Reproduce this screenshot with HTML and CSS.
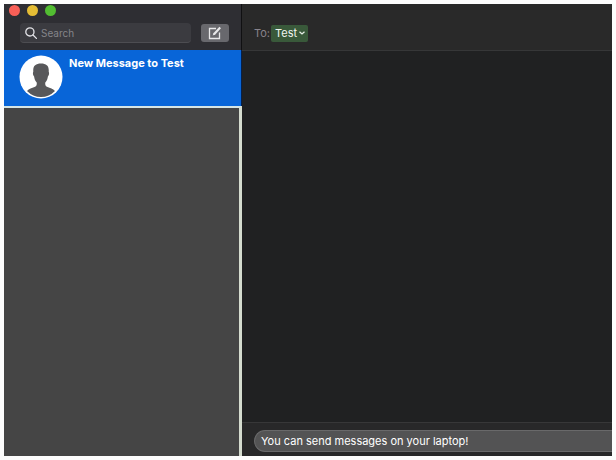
FILE: index.html
```html
<!DOCTYPE html>
<html lang="en">
<head>
  <meta charset="UTF-8" />
  <meta name="viewport" content="width=device-width, initial-scale=1.0"/>
  <title>Messages</title>
  <link rel="stylesheet" href="styles.css">
</head>
<body>

<div class="window">
  <aside class="sidebar">
    <div class="sidebar-top">
      <div class="lights">
        <button type="button" class="light red" aria-label="Close"></button>
        <button type="button" class="light yellow" aria-label="Minimize"></button>
        <button type="button" class="light green" aria-label="Zoom"></button>
      </div>
      <div class="tools">
        <label class="search">
          <svg width="12" height="12" viewBox="0 0 12 12" fill="none" stroke="#e4e4e8" stroke-width="1.3" stroke-linecap="round" aria-hidden="true">
            <circle cx="4.9" cy="4.9" r="4.1"/>
            <path d="M8 8l3.4 3.4"/>
          </svg>
          <input type="search" placeholder="Search" aria-label="Search" />
        </label>
        <button type="button" class="compose" aria-label="New message">
          <svg width="14" height="14" viewBox="0 0 14 14" fill="none" stroke="#e8e8ea" aria-hidden="true">
            <path d="M8 2.5H1.5v10h10V6.5" stroke-width="1.3"/>
            <path d="M6 8.2L12.2 1.6" stroke-width="2.2"/>
            <path d="M5.8 6.8L4.6 9.6L7.4 8.4z" fill="#e8e8ea" stroke="none"/>
          </svg>
        </button>
      </div>
    </div>
    <a href="#" class="conversation">
      <svg class="avatar" width="44" height="44" viewBox="0 0 44 44" aria-hidden="true">
        <circle cx="22" cy="22" r="21.5" fill="#fff"/>
        <path d="M8 36C10 33.500 13 33 15.500 32C17.500 31 18 30 17.700 27.500C16.300 26 15.400 24 15.100 21.500C13.900 20.500 13.600 18 14.300 16.500C13.800 11 16.500 8.500 22 8.500S30.200 11 29.700 16.500C30.400 18 30.100 20.500 28.900 21.500C28.600 24 27.700 26 26.300 27.500C26 30 26.500 31 28.500 32C31 33 34 33.500 36 36A19.500 19.500 0 0 1 8 36Z" fill="#58585a"/>
      </svg>
      <span class="name">New Message to Test</span>
    </a>
    <div class="list"></div>
  </aside>

  <main class="chat">
    <header class="chat-header">
      <span class="to">To:</span>
      <button type="button" class="recipient">Test
        <svg width="6" height="4" viewBox="0 0 6 4" fill="none" stroke="#e6eee6" stroke-width="1.3" aria-hidden="true">
          <path d="M0.500 0.700L3 2.900L5.500 0.700"/>
        </svg>
      </button>
    </header>
    <div class="messages"></div>
    <form class="chat-footer">
      <input type="text" class="message" value="You can send messages on your laptop!" aria-label="Message" />
    </form>
  </main>
</div>

</body>
</html>
```
FILE: styles.css
```css
* {
  box-sizing: border-box;
}

body {
  margin: 0;
  padding: 4px;
  height: 100vh;
  background: #fdfdfd;
  font-family: Inter, "Liberation Sans", sans-serif;
  font-size: 11px;
}

button, input {
  font: inherit;
  border: none;
  padding: 0;
  margin: 0;
}

.window {
  display: flex;
  height: 100%;
  overflow: hidden;
}

.sidebar {
  display: flex;
  flex-direction: column;
  flex: 0 0 39%;
  min-width: 238px;
}

.sidebar-top {
  height: 46px;
  padding: 1px 12px 0 5px;
  background: #2e2e33;
  border-right: 1px solid #101012;
}

.lights {
  display: flex;
  gap: 7px;
}

.light {
  width: 11px;
  height: 11px;
  border-radius: 50%;
}

.red {
  background: #f85f57;
}

.yellow {
  background: #e5bd35;
}

.green {
  background: #52bd32;
}

.tools {
  display: flex;
  align-items: center;
  gap: 10px;
  margin-top: 7px;
  padding-left: 11px;
}

.search {
  display: flex;
  align-items: center;
  gap: 4px;
  flex: 1;
  min-width: 0;
  height: 20px;
  padding-left: 5px;
  border-radius: 4px;
  background: #3b3b40;
  border-bottom: 1px solid #4d4d52;
  font-size: 10px;
}

.search input {
  flex: 1;
  min-width: 0;
  background: none;
  color: #e4e4e8;
  outline: none;
}

.search input::placeholder {
  color: #85858a;
}

.compose {
  display: flex;
  align-items: center;
  justify-content: center;
  width: 28px;
  height: 18px;
  border-radius: 3px;
  background: #68686d;
}

.conversation {
  display: flex;
  gap: 6px;
  height: 56px;
  padding: 5px 15px;
  background: #0865d8;
  border-right: 1px solid #06204a;
  color: #fff;
  text-decoration: none;
}

.avatar {
  flex: none;
}

.name {
  padding-top: 1px;
  line-height: 14px;
  font-weight: 700;
  white-space: nowrap;
}

.list {
  flex: 1;
  background: #454545;
  border-top: 2px solid #d5e5e5;
  border-right: 3px solid #d5dccf;
}

.chat {
  display: flex;
  flex-direction: column;
  flex: 1;
  min-width: 0;
  background: #202122;
}

.chat-header {
  display: flex;
  align-items: center;
  gap: 1px;
  height: 47px;
  padding: 12px 12px 0;
  background: #292929;
  border-bottom: 1px solid #363738;
}

.to {
  color: #88838b;
}

.recipient {
  display: flex;
  align-items: center;
  gap: 2px;
  height: 17px;
  padding: 0 3px 0 4px;
  border-radius: 2px;
  background: #39593a;
  color: #f0f5f0;
}

.messages {
  flex: 1;
}

.chat-footer {
  height: 34px;
  padding: 7px 0 0 12px;
  background: #282829;
  border-top: 1px solid #373738;
}

.message {
  display: block;
  width: 100%;
  height: 22px;
  padding-left: 6px;
  border: 1px solid #69696a;
  border-right: none;
  border-radius: 11px 0 0 11px;
  background: #535354;
  color: #fff;
  outline: none;
}
```
